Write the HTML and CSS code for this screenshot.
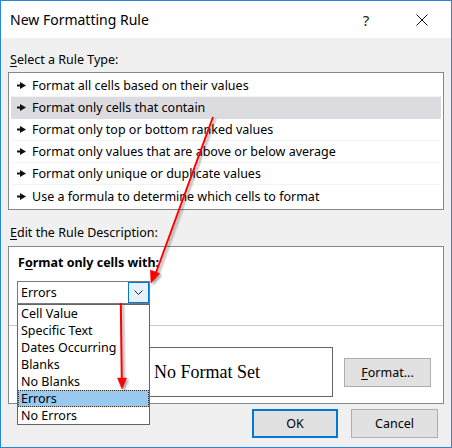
FILE: index.html
```html
<!DOCTYPE html>
<html>
<head>
<meta charset="utf-8">
<link rel="stylesheet" href="styles.css">
</head>
<body>
<div class="window">
  <div class="titlebar">
    <div class="title">New Formatting Rule</div>
    <div class="tb-btn help">?</div>
    <div class="tb-btn close">
      <svg width="12" height="12" viewBox="0 0 12 12"><path d="M0.5 0.5 L11.5 11.5 M11.5 0.5 L0.5 11.5" stroke="#111" stroke-width="1" fill="none"/></svg>
    </div>
  </div>
  <div class="body">
    <div class="label"><u>S</u>elect a Rule Type:</div>
    <div class="rule-list">
      <div class="rule"><svg class="bullet" width="9" height="7" viewBox="0 0 9 7"><polygon points="0,2.5 3,2.5 3,0 9,3.5 3,7 3,4.5 0,4.5" fill="#111"/></svg><span>Format all cells based on their values</span></div>
      <div class="rule selected"><svg class="bullet" width="9" height="7" viewBox="0 0 9 7"><polygon points="0,2.5 3,2.5 3,0 9,3.5 3,7 3,4.5 0,4.5" fill="#111"/></svg><span>Format only cells that contain</span></div>
      <div class="rule"><svg class="bullet" width="9" height="7" viewBox="0 0 9 7"><polygon points="0,2.5 3,2.5 3,0 9,3.5 3,7 3,4.5 0,4.5" fill="#111"/></svg><span>Format only top or bottom ranked values</span></div>
      <div class="rule"><svg class="bullet" width="9" height="7" viewBox="0 0 9 7"><polygon points="0,2.5 3,2.5 3,0 9,3.5 3,7 3,4.5 0,4.5" fill="#111"/></svg><span>Format only values that are above or below average</span></div>
      <div class="rule"><svg class="bullet" width="9" height="7" viewBox="0 0 9 7"><polygon points="0,2.5 3,2.5 3,0 9,3.5 3,7 3,4.5 0,4.5" fill="#111"/></svg><span>Format only unique or duplicate values</span></div>
      <div class="rule last"><svg class="bullet" width="9" height="7" viewBox="0 0 9 7"><polygon points="0,2.5 3,2.5 3,0 9,3.5 3,7 3,4.5 0,4.5" fill="#111"/></svg><span>Use a formula to determine which cells to format</span></div>
    </div>
    <div class="label label2"><u>E</u>dit the Rule Description:</div>
    <div class="desc">
      <div class="desc-top">
        <div class="heading">F<u>o</u>rmat only cells with:</div>
        <div class="combo">
          <span class="combo-value">Errors</span>
          <span class="combo-btn">
            <svg width="9" height="5" viewBox="0 0 9 5"><path d="M0.5 0.5 L4.5 4.5 L8.5 0.5" stroke="#222" stroke-width="1" fill="none"/></svg>
          </span>
          <div class="dropdown">
            <div class="opt">Cell Value</div>
            <div class="opt">Specific Text</div>
            <div class="opt">Dates Occurring</div>
            <div class="opt">Blanks</div>
            <div class="opt">No Blanks</div>
            <div class="opt active">Errors</div>
            <div class="opt">No Errors</div>
          </div>
        </div>
      </div>
      <div class="desc-bottom">
        <div class="preview">No Format Set</div>
        <div class="btn format-btn"><u>F</u>ormat...</div>
      </div>
    </div>
    <div class="buttons">
      <div class="btn ok">OK</div>
      <div class="btn cancel">Cancel</div>
    </div>
  </div>
  <svg class="arrows" width="452" height="448" viewBox="0 0 452 448">
    <g fill="#ff0000" stroke="#ff0000">
      <line x1="213" y1="117" x2="155.5" y2="274" stroke-width="2"/>
      <polygon points="151,283 159.7,273.4 150.3,270" stroke-width="0.5"/>
      <line x1="120.8" y1="303" x2="121.8" y2="380" stroke-width="2"/>
      <polygon points="122,389 126.5,378 117.5,378" stroke-width="0.5"/>
    </g>
  </svg>
</div>
</body>
</html>
```

FILE: styles.css
```css
* { box-sizing: border-box; }
html, body {
  margin: 0;
  padding: 0;
}
body {
  width: 452px;
  height: 448px;
  overflow: hidden;
  font-family: "Noto Sans", "Open Sans", sans-serif;
  font-size: 12.5px;
  color: #000;
}
u { text-decoration: underline; text-underline-offset: 2px; }
.window {
  position: relative;
  width: 452px;
  height: 448px;
  border: 1px solid #2a86dc;
  display: flex;
  flex-direction: column;
  background: #f0f0f0;
}
.titlebar {
  height: 37px;
  flex: none;
  background: #fff;
  display: flex;
  align-items: center;
  padding: 0 6px 0 9px;
}
.title {
  flex: 1;
  font-size: 14px;
  color: #000;
}
.tb-btn {
  width: 46px;
  height: 37px;
  display: flex;
  align-items: center;
  justify-content: center;
}
.help {
  font-size: 15px;
  margin-right: 10px;
  color: #222;
}
.body {
  flex: 1;
  padding: 14px 7px 9px 7px;
  display: flex;
  flex-direction: column;
}
.label {
  line-height: 16px;
  height: 16px;
  padding-left: 2px;
}
.rule-list {
  margin-top: 4px;
  border: 1px solid #828790;
  background: #fff;
  padding: 2px;
}
.rule {
  height: 22px;
  display: flex;
  align-items: center;
  padding-left: 6px;
  border-bottom: 1px solid #f3f3f3;
}
.rule.last { border-bottom: none; }
.rule.selected { background: #dcdce0; border-bottom-color: #dcdce0; }
.bullet { flex: none; margin-right: 6px; }
.label2 { margin-top: 15px; }
.desc {
  margin-top: 5px;
  border: 1px solid #828790;
  background: #fff;
}
.desc-top {
  height: 79px;
  padding: 8px 0 0 8px;
  border-bottom: 1px solid #c8c8c8;
}
.heading {
  font-weight: bold;
  line-height: 16px;
  height: 16px;
  padding-left: 1px;
}
.combo {
  position: relative;
  margin-top: 10px;
  width: 133px;
  height: 23px;
  border: 1px solid #7a7a7a;
  display: flex;
  align-items: center;
  background: #fff;
}
.combo-value {
  flex: 1;
  padding-left: 3px;
  line-height: 21px;
}
.combo-btn {
  width: 21px;
  height: 21px;
  border: 1px solid #0078d7;
  background: #e5f1fb;
  display: flex;
  align-items: center;
  justify-content: center;
}
.dropdown {
  position: absolute;
  top: calc(100% + 1px);
  left: -1px;
  width: 133px;
  border: 1px solid #646464;
  background: #fff;
  z-index: 2;
}
.opt {
  height: 17px;
  line-height: 17px;
  padding-left: 3px;
}
.opt.active {
  background: #99c9ef;
  outline: 1px dotted #3a2a1a;
  outline-offset: -1px;
}
.desc-bottom {
  height: 77px;
  padding: 21px 12px 0 0;
  display: flex;
  justify-content: flex-end;
  align-items: flex-start;
}
.preview {
  width: 252px;
  height: 50px;
  border: 1px solid #646464;
  display: flex;
  align-items: center;
  justify-content: center;
  font-family: "Liberation Serif", "Times New Roman", serif;
  font-size: 18px;
}
.btn {
  height: 29px;
  border: 1px solid #adadad;
  background: #e1e1e1;
  display: flex;
  align-items: center;
  justify-content: center;
}
.format-btn {
  width: 87px;
  margin-left: 11px;
  margin-top: 11px;
}
.buttons {
  margin-top: 5px;
  display: flex;
  justify-content: flex-end;
  gap: 13px;
  padding-right: 6px;
}
.ok {
  width: 86px;
  border: 2px solid #0078d7;
}
.cancel { width: 87px; }
.arrows {
  position: absolute;
  left: -1px;
  top: -1px;
  pointer-events: none;
  z-index: 5;
  filter: drop-shadow(2px 2px 1px rgba(0,0,0,0.35));
}
```
